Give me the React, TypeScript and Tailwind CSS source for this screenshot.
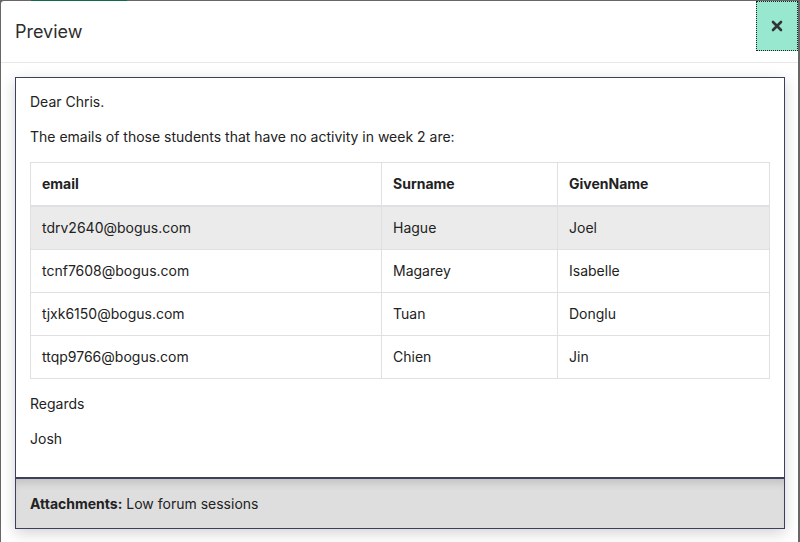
import React from "react";

const rows = [
  { email: "tdrv2640@bogus.com", surname: "Hague", given: "Joel" },
  { email: "tcnf7608@bogus.com", surname: "Magarey", given: "Isabelle" },
  { email: "tjxk6150@bogus.com", surname: "Tuan", given: "Donglu" },
  { email: "ttqp9766@bogus.com", surname: "Chien", given: "Jin" },
];

export default function App() {
  return (
    <div
      className="relative w-[800px] h-[542px] overflow-hidden bg-[#676767]"
      style={{ fontFamily: "Inter, 'Noto Sans', sans-serif" }}
    >
      <div className="absolute left-[31px] top-0 h-[1px] w-[96px] bg-[#0e6a48]" />
      <div className="absolute left-[1px] top-[1px] w-[797px] h-[560px] bg-white rounded-tl-[3px]">
        {/* Header */}
        <div className="flex h-[62px] items-center justify-between border-b border-[#e8e8e8] pl-[14px]">
          <h1 className="text-[18px] leading-[24px] text-[#2d2d2d] font-normal">Preview</h1>
          <button className="self-start w-[42px] h-[50px] bg-[#98e8d0] border border-dotted border-[#222] flex items-center justify-center">
            <svg width="12" height="12" viewBox="0 0 12 12">
              <path d="M2 2 L10 10 M10 2 L2 10" stroke="#333" strokeWidth="2.6" strokeLinecap="round" />
            </svg>
          </button>
        </div>
        {/* Body */}
        <div className="pl-[14px] pt-[14px]">
          <div className="w-[770px] border border-[#3d3f5e] shadow-[0_4px_14px_rgba(0,0,0,0.18)] text-[14px] leading-[20px] text-[#222]">
            <div className="px-[14px] pt-[14px] pb-[14px]">
              <p className="mb-[15px]">Dear Chris.</p>
              <p className="mb-[15px]">The emails of those students that have no activity in week 2 are:</p>
              <table className="w-[739px] border-collapse border border-[#dfdfe4] table-fixed">
                <colgroup>
                  <col className="w-[351px]" />
                  <col className="w-[176px]" />
                  <col className="w-[212px]" />
                </colgroup>
                <thead>
                  <tr className="border-b-2 border-[#dfdfe4]">
                    <th className="text-left font-bold px-[11px] py-[11px] h-[42px] border-r border-[#dfdfe4]">email</th>
                    <th className="text-left font-bold px-[11px] py-[11px] border-r border-[#dfdfe4]">Surname</th>
                    <th className="text-left font-bold px-[11px] py-[11px]">GivenName</th>
                  </tr>
                </thead>
                <tbody>
                  {rows.map((r, i) => (
                    <tr key={r.email} className={`border-b border-[#dfdfe4] ${i === 0 ? "bg-[#ebebeb]" : "bg-white"}`}>
                      <td className="px-[11px] py-[11px] border-r border-[#dfdfe4]">{r.email}</td>
                      <td className="px-[11px] py-[11px] border-r border-[#dfdfe4]">{r.surname}</td>
                      <td className="px-[11px] py-[11px]">{r.given}</td>
                    </tr>
                  ))}
                </tbody>
              </table>
              <p className="mt-[15px] mb-[15px]">Regards</p>
              <p className="mb-[14px]">Josh</p>
            </div>
            <div className="border-t-2 border-[#3d3f5e] bg-[#dedede] shadow-[inset_0_8px_8px_-4px_rgba(0,0,0,0.13)] px-[14px] pt-[15px] pb-[14px]">
              <span className="font-bold">Attachments:</span> Low forum sessions
            </div>
          </div>
        </div>
      </div>
    </div>
  );
}
